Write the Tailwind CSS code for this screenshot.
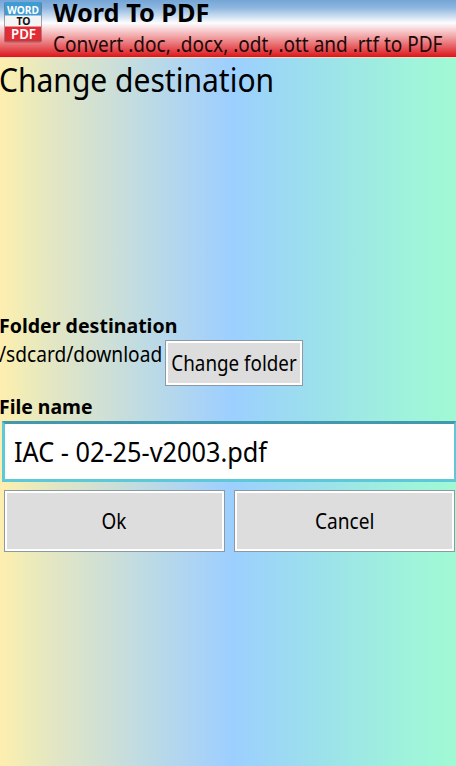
<!DOCTYPE html>
<html lang="en">
<head>
<meta charset="utf-8">
<title>Word To PDF</title>
<script src="https://cdn.jsdelivr.net/npm/@tailwindcss/browser@4"></script>
</head>
<body class="w-[456px] h-[766px] overflow-hidden font-['Noto_Sans',sans-serif] text-black">
<main class="flex flex-col h-[766px] bg-[linear-gradient(90deg,#feeeb0_0px,#f8edb2_12px,#efecb8_24px,#e0e5c6_60px,#cddfd7_110px,#bbdae6_152px,#abd3f5_198px,#9ccfff_232px,#9cd6f7_265px,#9ce1eb_320px,#9eebe2_370px,#9ff3db_410px,#a0f9d4_456px)]">
  <header class="flex h-[58px] shrink-0 border-b border-[#f5e0c0] bg-[linear-gradient(180deg,#74a5d6_0px,#8fb7df_8px,#fdfdff_23px,#f2a9ab_36px,#dd1d22_56px,#d8161b_57px)]">
    <svg class="w-[46px] h-[46px] shrink-0" viewBox="0 0 46 46">
      <rect x="4" y="2" width="38" height="40.500" rx="2" fill="#52383e" opacity=".45"/>
      <rect x="5" y="2" width="36" height="39" rx="1" fill="#f4f4f4"/>
      <path d="M5 2h36v13.500H5z" fill="#3f9bd4"/>
      <path d="M5 26.500h36V41H5z" fill="#e22c35"/>
      <g font-family="Noto Sans, sans-serif" font-weight="700" text-anchor="middle">
        <text x="23" y="13.500" font-size="11" textLength="32" lengthAdjust="spacingAndGlyphs" fill="#fff">WORD</text>
        <text x="23.500" y="25" font-size="10" textLength="14" lengthAdjust="spacingAndGlyphs" fill="#111">TO</text>
        <text x="23.500" y="38.500" font-size="13.500" font-weight="600" textLength="25" lengthAdjust="spacingAndGlyphs" fill="#fff">PDF</text>
      </g>
    </svg>
    <div class="pl-[7px] whitespace-nowrap">
      <h1 class="h-[31px] leading-[25px] text-[25px] font-bold"><span class="inline-block origin-left scale-x-[1.012]">Word To PDF</span></h1>
      <p class="h-[26px] leading-[26px] w-[390px] text-[21px] text-[#210808]"><span class="inline-block origin-left scale-x-[0.905]">Convert .doc, .docx, .odt, .ott and .rtf to PDF</span></p>
    </div>
  </header>
  <h2 class="h-[254px] shrink-0 leading-[44px] text-[32px] whitespace-nowrap"><span class="inline-block origin-left -ml-px scale-x-[0.938]">Change destination</span></h2>
  <section class="whitespace-nowrap">
    <h3 class="h-[28px] leading-[28px] text-[20px] font-bold"><span class="inline-block origin-left -ml-px scale-x-[0.977]">Folder destination</span></h3>
    <div class="flex h-[46px]">
      <p class="w-[165px] shrink-0 leading-[29px] text-[21px]"><span class="inline-block origin-left -ml-px scale-x-[0.911]">/sdcard/download</span></p>
      <button class="w-[138px] h-[46px] flex items-center justify-center border border-[#8d99a5] bg-[#ddd] shadow-[inset_0_0_0_2px_#fff] text-[21px]"><span class="inline-block pt-0.5 scale-x-[0.895]">Change folder</span></button>
    </div>
    <h3 class="h-[35px] leading-[41px] text-[20px] font-bold"><span class="inline-block origin-left -ml-px scale-x-[0.97]">File name</span></h3>
    <div class="ml-[2px] h-[61px] flex items-center border-[3px] border-r-2 border-[#5cc8d8] border-t-[#4298ac] bg-white pl-[9px] text-[27px]"><span class="inline-block origin-left pt-px scale-x-[0.937]">IAC - 02-25-v2003.pdf</span></div>
    <div class="flex gap-[9px] pl-1 pt-2 text-[21px]">
      <button class="w-[221px] h-[62px] flex items-center justify-center border border-[#8d99a0] bg-[#ddd] shadow-[inset_0_0_0_2px_#fff]"><span class="inline-block -ml-0.5 pt-0.5 scale-x-[0.9]">Ok</span></button>
      <button class="w-[221px] h-[62px] flex items-center justify-center border border-[#8d99a0] bg-[#ddd] shadow-[inset_0_0_0_2px_#fff]"><span class="inline-block pt-0.5 scale-x-[0.91]">Cancel</span></button>
    </div>
  </section>
</main>
</body>
</html>
